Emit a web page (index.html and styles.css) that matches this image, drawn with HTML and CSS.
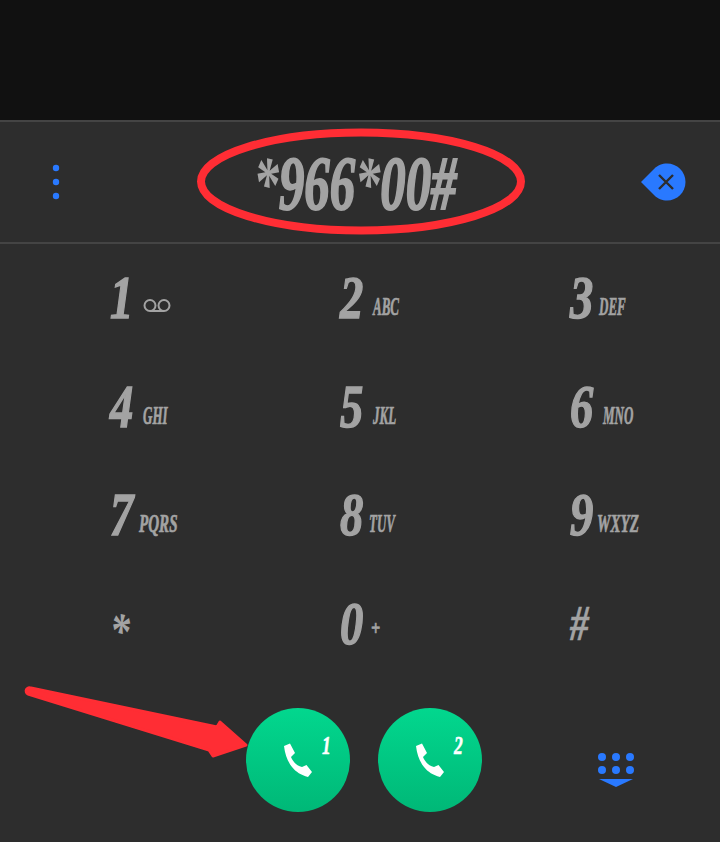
FILE: index.html
```html
<!DOCTYPE html>
<html lang="en">
<head>
<meta charset="utf-8">
<title>Dialer</title>
<link rel="stylesheet" href="styles.css">
</head>
<body>
<div class="phone">
  <div class="status"></div>
  <header class="display">
    <svg class="more" viewBox="0 0 8 36"><circle cx="4" cy="4" r="3.2"/><circle cx="4" cy="18" r="3.2"/><circle cx="4" cy="32" r="3.2"/></svg>
    <div class="number"><span><em class="ast">*</em>966<em class="ast">*</em>00#</span></div>
    <svg class="erase" viewBox="0 0 46 38"><path class="erase-bg" d="M1 19 L14 6 C18 2 22 0.500 27 0.500 C37 0.500 45.500 8.500 45.500 19 C45.500 29.500 37 37.500 27 37.500 C22 37.500 18 36 14 32 Z"/><path class="erase-x" d="M19 12 L33 26 M33 12 L19 26"/></svg>
  </header>
  <main class="keypad">
    <div class="key"><b class="d">1</b><svg class="vm" viewBox="0 0 28 13"><circle cx="7" cy="6.500" r="5.500"/><circle cx="21" cy="6.500" r="5.500"/><path d="M7 12 H21"/></svg></div>
    <div class="key"><b class="d">2</b><i class="l">ABC</i></div>
    <div class="key"><b class="d">3</b><i class="l near">DEF</i></div>
    <div class="key"><b class="d">4</b><i class="l">GHI</i></div>
    <div class="key"><b class="d">5</b><i class="l">JKL</i></div>
    <div class="key"><b class="d">6</b><i class="l">MNO</i></div>
    <div class="key"><b class="d">7</b><i class="l near wide">PQRS</i></div>
    <div class="key"><b class="d">8</b><i class="l near">TUV</i></div>
    <div class="key"><b class="d">9</b><i class="l nearest wide">WXYZ</i></div>
    <div class="key"><b class="d star">*</b></div>
    <div class="key"><b class="d">0</b><i class="l plus">+</i></div>
    <div class="key"><b class="d hash">#</b></div>
  </main>
  <footer class="actions">
    <button class="call"><svg viewBox="0 0 104 104"><path d="M38 38 L44 35.500 L49 45 L45 49 C47 54 51 58 56 59 L60.500 57 L66 64 L62 69 C55 67 50 64 46 59 C42 54 39 47 38 38 Z"/></svg><span class="sim">1</span></button>
    <button class="call"><svg viewBox="0 0 104 104"><path d="M38 38 L44 35.500 L49 45 L45 49 C47 54 51 58 56 59 L60.500 57 L66 64 L62 69 C55 67 50 64 46 59 C42 54 39 47 38 38 Z"/></svg><span class="sim">2</span></button>
    <svg class="pad" viewBox="0 0 36 35"><circle cx="4" cy="4" r="4"/><circle cx="18" cy="4" r="4"/><circle cx="32" cy="4" r="4"/><circle cx="4" cy="17" r="4"/><circle cx="18" cy="17" r="4"/><circle cx="32" cy="17" r="4"/><path d="M1 26 H35 L18 34 Z"/></svg>
  </footer>
  <svg class="marks" viewBox="0 0 720 842">
    <ellipse class="ring" cx="361" cy="181.500" rx="160" ry="49"/>
    <path class="arrow" d="M31 688 L217 727 L220 722 L246 745 L213 756 L209 750 L28 694 A3 3 0 0 1 31 688 Z"/>
  </svg>
</div>
</body>
</html>
```
FILE: styles.css
```css
* { box-sizing: border-box; }
html, body { margin: 0; padding: 0; }
body { background: #2d2d2d; }
.phone { position: relative; width: 720px; height: 842px; overflow: hidden; background: #2d2d2d; color: #a3a3a3; font-family: "Liberation Serif", serif; display: flex; flex-direction: column; }
.status { height: 120px; background: #111; }
.display { height: 124px; border-top: 2px solid #444; border-bottom: 2px solid #444; display: flex; align-items: center; padding: 0 34px 0 52px; }
.more { width: 8px; height: 36px; fill: #2979ff; }
.number { flex: 1; height: 120px; display: flex; justify-content: center; align-items: center; padding: 2px 0 0 10px; }
.number span { display: inline-block; font-weight: bold; font-style: italic; font-size: 76px; line-height: 1; transform: scaleX(.667); white-space: nowrap; -webkit-text-stroke: 2px #a3a3a3; }
.ast { font-style: italic; -webkit-text-stroke: 0; }
.erase { width: 46px; height: 38px; }
.erase-bg { fill: #2979ff; }
.erase-x { fill: none; stroke: #2d2d2d; stroke-width: 2.400; }
.keypad { height: 435px; padding-left: 110px; display: grid; grid-template-columns: repeat(3, 230px); grid-auto-rows: 108.700px; }
.key { display: flex; align-items: baseline; height: 100%; padding-top: 24px; }
.d { display: block; width: 31px; font-size: 62px; line-height: 58px; font-weight: bold; font-style: italic; transform: scaleX(.75); transform-origin: left; -webkit-text-stroke: 1.500px #a3a3a3; }
.d.star { font-size: 50px; transform: translateY(8px) scaleX(.8); -webkit-text-stroke: 0; }
.d.hash { font-size: 50px; transform: scaleX(.75); -webkit-text-stroke: .5px #a3a3a3; }
.l { display: block; margin-left: 2px; font-size: 26px; font-weight: bold; font-style: italic; white-space: nowrap; transform: translateY(-3px) scaleX(.5); transform-origin: left; -webkit-text-stroke: .7px #a3a3a3; }
.l.near { margin-left: -2px; }
.l.nearest { margin-left: -4px; }
.l.wide { transform: translateY(-3px) scaleX(.58); }
.l.plus { font-size: 20px; transform: translateY(-9px) scaleX(.8); margin-left: 0; }
.vm { width: 28px; height: 13px; margin-left: 2px; fill: none; stroke: #a3a3a3; stroke-width: 2; transform: translateY(-6px); }
.actions { flex: 1; display: flex; align-items: flex-start; padding: 29px 0 0 246px; }
.call { position: relative; width: 104px; height: 104px; margin-right: 28px; padding: 0; border: 0; border-radius: 50%; background: linear-gradient(#02d78e, #00b877); font-family: inherit; }
.call svg { display: block; width: 104px; height: 104px; fill: #fff; }
.sim { position: absolute; left: 76px; top: 25px; color: #fff; font-size: 25px; line-height: 25px; font-weight: bold; font-style: italic; transform: scaleX(.7); transform-origin: left; -webkit-text-stroke: .6px #fff; }
.pad { width: 36px; height: 35px; margin: 45px 0 0 88px; fill: #2979ff; }
.marks { position: absolute; left: 0; top: 0; width: 720px; height: 842px; pointer-events: none; }
.ring { fill: none; stroke: #ff2d34; stroke-width: 8; }
.arrow { fill: #ff2d34; stroke: #ff2d34; stroke-width: 3; stroke-linejoin: round; }
```
